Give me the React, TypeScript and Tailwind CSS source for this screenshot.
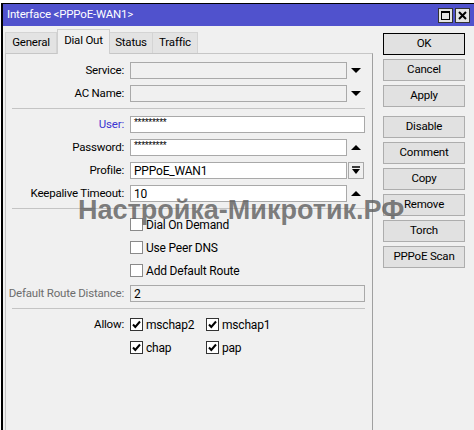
import React from "react";

function DownArrow() {
  return (
    <svg width="10" height="6" viewBox="0 0 10 6">
      <path d="M0 0h10L5 5z" fill="#000" />
    </svg>
  );
}

function UpArrow() {
  return (
    <svg width="10" height="6" viewBox="0 0 10 6">
      <path d="M0 5h10L5 0z" fill="#000" />
    </svg>
  );
}

function Field({ value = "", tone = "white", wide = false, secret = false }: { value?: string; tone?: "white" | "off"; wide?: boolean; secret?: boolean }) {
  return (
    <div
      className={
        "h-[17px] border border-[#a9a9a9] pl-[3px] flex items-center text-black leading-none text-[12px] " +
        (tone === "white" ? "bg-white " : "bg-[#f0f0f0] ") +
        (wide ? "w-[235px]" : "w-[217px]")
      }
    >
      {secret ? (
        <span className="text-[10px] tracking-[-0.3px] font-['Liberation_Sans',sans-serif] -translate-y-[2px]">{value}</span>
      ) : (
        value
      )}
    </div>
  );
}

function Row({ label, color = "text-black", children }: { label: string; color?: string; children: React.ReactNode }) {
  return (
    <div className="flex items-center h-[17px]">
      <div className={"w-[119px] text-right pr-[1px] whitespace-nowrap " + color}>{label}</div>
      <div className="ml-[5px] flex items-center">{children}</div>
    </div>
  );
}

function Slot({ children }: { children?: React.ReactNode }) {
  return <div className="w-[18px] flex justify-center items-center">{children}</div>;
}

function Check({ on = false }: { on?: boolean }) {
  return (
    <div className={"w-[13px] h-[13px] bg-white border flex items-center justify-center " + (on ? "border-[#333]" : "border-[#8a8a8a]")}>
      {on && (
        <svg width="9" height="9" viewBox="0 0 9 9">
          <path d="M1 4.5l2.3 2.5L8 1.5" stroke="#000" strokeWidth="2" fill="none" />
        </svg>
      )}
    </div>
  );
}

function Sep() {
  return <div className="ml-[6px] w-[353px] h-px bg-[#c4c4c4] mt-[6px] mb-[7px]" />;
}

const buttons = ["Cancel", "Apply"];
const buttons2 = ["Disable", "Comment", "Copy", "Remove", "Torch", "PPPoE Scan"];

function Btn({ text, main = false }: { text: string; main?: boolean }) {
  return (
    <div
      className={
        "w-[82px] h-[22px] flex items-center justify-center bg-[#e1e1e1] border " +
        (main ? "border-black" : "border-[#adadad]")
      }
    >
      {text}
    </div>
  );
}

export default function App() {
  return (
    <div className="w-[474px] h-[430px] bg-white relative overflow-hidden pt-[3px] pl-[1px] text-[11.5px] tracking-[-0.2px] font-['Roboto',sans-serif] text-black">
      <div className="h-full border-l-2 border-t border-black bg-[#f0f0f0] flex flex-col">
        {/* title bar */}
        <div className="h-[22px] bg-[#5052cd] flex items-center pl-[4px] text-white">
          <span>Interface &lt;PPPoE-WAN1&gt;</span>
          <div className="ml-auto mr-[4px] flex gap-[2px]">
            <div className="w-[15px] h-[15px] bg-[#e4e4e4] border border-[#333] flex items-center justify-center">
              <div className="w-[9px] h-[9px] border border-black border-t-2" />
            </div>
            <div className="w-[15px] h-[15px] bg-[#e4e4e4] border border-[#333] flex items-center justify-center">
              <svg width="9" height="9" viewBox="0 0 9 9">
                <path d="M1 1l7 7M8 1L1 8" stroke="#000" strokeWidth="2" />
              </svg>
            </div>
          </div>
        </div>

        <div className="flex flex-1">
          {/* left: tabs + panel */}
          <div className="w-[370px] pl-[2px] flex flex-col">
            <div className="h-[27px] flex items-end relative z-10">
              <div className="h-[21px] w-[52px] bg-[#e3e3e3] border border-[#d4d4d4] border-b-0 flex items-center justify-center">General</div>
              <div className="h-[25px] w-[53px] -mb-px bg-[#f0f0f0] border border-[#cfcfcf] border-b-0 flex items-center justify-center pb-[2px]">Dial Out</div>
              <div className="h-[21px] w-[43px] bg-[#e3e3e3] border border-[#d4d4d4] border-b-0 border-l-0 flex items-center justify-center">Status</div>
              <div className="h-[21px] w-[45px] bg-[#e3e3e3] border border-[#d4d4d4] border-b-0 border-l-0 flex items-center justify-center">Traffic</div>
            </div>
            <div className="flex-1 border border-b-0 border-[#c6c6c6] border-r-[#a0a0a0] pt-[8px] flex flex-col">
              <div className="flex flex-col gap-[6px]">
                <Row label="Service:">
                  <Field tone="off" />
                  <Slot><DownArrow /></Slot>
                </Row>
                <Row label="AC Name:">
                  <Field tone="off" />
                  <Slot><DownArrow /></Slot>
                </Row>
              </div>
              <Sep />
              <div className="flex flex-col gap-[6px]">
                <Row label="User:" color="text-[#3b35d2]">
                  <Field value="*********" wide secret />
                </Row>
                <Row label="Password:">
                  <Field value="*********" secret />
                  <Slot><UpArrow /></Slot>
                </Row>
                <Row label="Profile:">
                  <Field value="PPPoE_WAN1" />
                  <div className="ml-[1px] w-[16px] h-[17px] border border-[#a9a9a9] bg-[#f0f0f0] flex items-center justify-center">
                    <svg width="8" height="9" viewBox="0 0 8 9">
                      <path d="M0 1h8" stroke="#000" strokeWidth="1.5" />
                      <path d="M0 3h8L4 8z" fill="#000" />
                    </svg>
                  </div>
                </Row>
                <Row label="Keepalive Timeout:">
                  <Field value="10" />
                  <Slot><UpArrow /></Slot>
                </Row>
              </div>
              <Sep />
              <div className="flex flex-col gap-[6px]">
                {["Dial On Demand", "Use Peer DNS", "Add Default Route"].map((t) => (
                  <Row key={t} label="">
                    <Check />
                    <span className="ml-[3px] text-[12px]">{t}</span>
                  </Row>
                ))}
                <Row label="Default Route Distance:" color="text-[#6d6d6d]">
                  <Field value="2" tone="off" wide />
                </Row>
              </div>
              <Sep />
              <div className="flex flex-col gap-[6px]">
                <Row label="Allow:">
                  <div className="w-[76px] flex items-center">
                    <Check on />
                    <span className="ml-[3px] text-[12px]">mschap2</span>
                  </div>
                  <Check on />
                  <span className="ml-[3px] text-[12px]">mschap1</span>
                </Row>
                <Row label="">
                  <div className="w-[76px] flex items-center">
                    <Check on />
                    <span className="ml-[3px] text-[12px]">chap</span>
                  </div>
                  <Check on />
                  <span className="ml-[3px] text-[12px]">pap</span>
                </Row>
              </div>
            </div>
          </div>

          {/* right: buttons */}
          <div className="pl-[10px] pt-[7px] flex flex-col">
            <div className="flex flex-col gap-[4px]">
              <Btn text="OK" main />
              {buttons.map((b) => (
                <Btn key={b} text={b} />
              ))}
            </div>
            <div className="flex flex-col gap-[4px] mt-[9px]">
              {buttons2.map((b) => (
                <Btn key={b} text={b} />
              ))}
            </div>
          </div>
        </div>
      </div>

      {/* watermark */}
      <div className="absolute left-[78px] top-[197px] text-[27px] font-bold leading-none tracking-normal text-[#5c5c5c]/80 font-['Liberation_Sans',sans-serif] pointer-events-none">
        Настройка-Микротик.РФ
      </div>
    </div>
  );
}
